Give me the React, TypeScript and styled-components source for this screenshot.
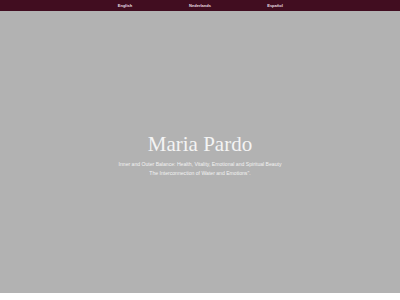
import React from 'react';
import styled, { createGlobalStyle } from 'styled-components';

const GlobalStyle = createGlobalStyle`
  html, body {
    margin: 0;
    padding: 0;
    background: #ffffff;
  }
`;

const Page = styled.div`
  width: 400px;
  height: 300px;
  display: flex;
  flex-direction: column;
  overflow: hidden;
`;

const TopBar = styled.nav`
  height: 11px;
  background-color: #410d20;
  display: grid;
  grid-template-columns: repeat(3, 75px);
  justify-content: center;
  align-items: center;
`;

const LangLink = styled.a`
  text-align: center;
  font-family: 'Liberation Sans', Arial, sans-serif;
  font-size: 4px;
  font-weight: 700;
  color: #e8dfe3;
  text-decoration: none;
  line-height: 11px;
`;

const Hero = styled.section`
  height: 282px;
  background-color: #b2b2b2;
  display: flex;
  flex-direction: column;
  align-items: center;
  justify-content: center;
  padding-top: 6px;
  box-sizing: border-box;
`;

const Title = styled.h1`
  margin: 0 0 4px;
  font-family: 'Liberation Serif', 'Times New Roman', serif;
  font-weight: 400;
  font-size: 21px;
  line-height: 24px;
  color: #f4f4f4;
`;

const Subtitle = styled.p`
  margin: 0;
  font-family: 'Liberation Sans', Arial, sans-serif;
  font-size: 5.1px;
  line-height: 9px;
  color: #f2f2f2;
  text-align: center;
`;

export default function App() {
  return (
    <Page>
      <GlobalStyle />
      <TopBar>
        <LangLink href="#">English</LangLink>
        <LangLink href="#">Nederlands</LangLink>
        <LangLink href="#">Español</LangLink>
      </TopBar>
      <Hero>
        <Title>Maria Pardo</Title>
        <Subtitle>
          Inner and Outer Balance: Health, Vitality, Emotional and Spiritual Beauty
          <br />
          The Interconnection of Water and Emotions".
        </Subtitle>
      </Hero>
    </Page>
  );
}
